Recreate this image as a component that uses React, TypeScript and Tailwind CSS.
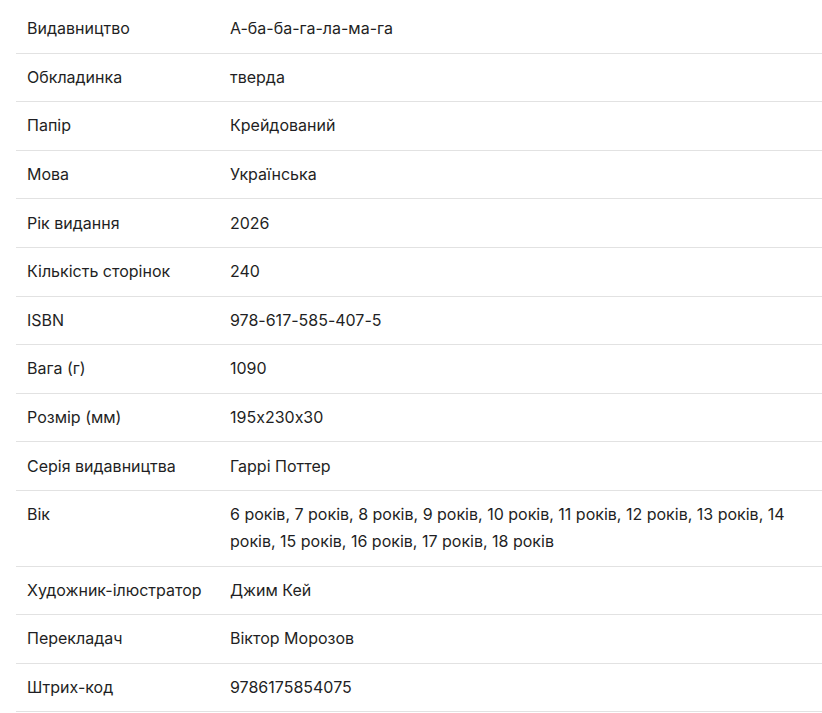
const rows: [string, string][] = [
  ["Видавництво", "А-ба-ба-га-ла-ма-га"],
  ["Обкладинка", "тверда"],
  ["Папір", "Крейдований"],
  ["Мова", "Українська"],
  ["Рік видання", "2026"],
  ["Кількість сторінок", "240"],
  ["ISBN", "978-617-585-407-5"],
  ["Вага (г)", "1090"],
  ["Розмір (мм)", "195x230x30"],
  ["Серія видавництва", "Гаррі Поттер"],
  ["Вік", "6 років, 7 років, 8 років, 9 років, 10 років, 11 років, 12 років, 13 років, 14 років, 15 років, 16 років, 17 років, 18 років"],
  ["Художник-ілюстратор", "Джим Кей"],
  ["Перекладач", "Віктор Морозов"],
  ["Штрих-код", "9786175854075"],
];

export default function App() {
  return (
    <div className="bg-white min-h-screen pl-4 pt-[5px] font-['Inter',sans-serif] [font-feature-settings:'calt'_0] text-[16px] text-[#1f1f24]">
      <table className="w-full border-collapse">
        <tbody>
          {rows.map(([label, value]) => (
            <tr key={label} className="border-b border-[#e2e2e2]">
              <td className="w-[203px] px-[11px] py-[10.3px] leading-[27px] align-top">{label}</td>
              <td className="px-[11px] py-[10.3px] leading-[27px] align-top">{value}</td>
            </tr>
          ))}
        </tbody>
      </table>
    </div>
  );
}
